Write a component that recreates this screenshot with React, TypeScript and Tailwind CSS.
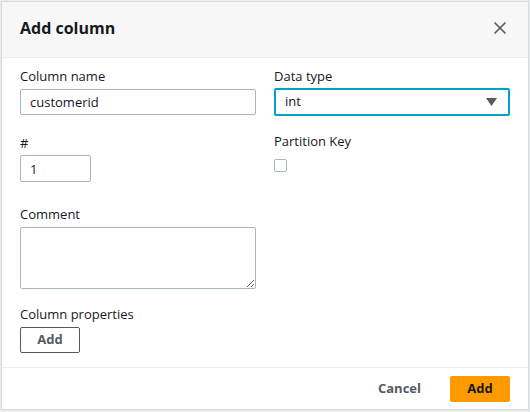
import { X } from 'lucide-react'

export default function App() {
  return (
    <div className="w-[530px] h-[412px] bg-[#eaeded] pt-px pl-px" style={{ fontFamily: '"Open Sans", sans-serif' }}>
      <div className="w-[528px] h-[409px] bg-white border border-[#d5dbdb] flex flex-col">
        <div className="h-[56px] bg-[#f7f7f7] border-b border-[#eaeded] flex items-center justify-between pl-[18px] pr-[18px] pb-[3px]">
          <h1 className="text-[16px] font-bold text-[#16191f]">Add column</h1>
          <button className="text-[#545b64]">
            <X size={20} strokeWidth={2} />
          </button>
        </div>

        <div className="flex-1 px-[18px] pt-[8px]">
          <div className="grid grid-cols-[236px_236px] gap-x-[18px]">
            <div>
              <label className="block text-[13px] text-[#16191f] leading-[20px] mb-[3px]">Column name</label>
              <input
                defaultValue="customerid"
                className="w-full h-[26px] border border-[#aab7b8] rounded-[2px] px-[9px] text-[13px] text-[#16191f] outline-none"
              />
            </div>
            <div>
              <label className="block text-[13px] text-[#16191f] leading-[20px] mb-[2px]">Data type</label>
              <div className="w-full h-[28px] border-2 border-[#00a1c9] rounded-[2px] px-[9px] flex items-center justify-between">
                <span className="text-[13px] text-[#16191f]">int</span>
                <svg width="11" height="8" viewBox="0 0 11 8" className="mr-[2px]">
                  <path d="M0 0 H11 L5.5 8 Z" fill="#545b64" />
                </svg>
              </div>
            </div>

            <div className="mt-[17px]">
              <label className="block text-[13px] text-[#16191f] leading-[20px] mb-[2px]">#</label>
              <input
                defaultValue="1"
                className="w-[71px] h-[27px] border border-[#aab7b8] rounded-[2px] px-[9px] text-[13px] text-[#16191f] outline-none"
              />
            </div>
            <div className="mt-[15px]">
              <label className="block text-[13px] text-[#16191f] leading-[20px]">Partition Key</label>
              <div className="mt-[8px] w-[13px] h-[13px] border border-[#aab7b8] rounded-[2px] bg-white" />
            </div>
          </div>

          <div className="mt-[22px]">
            <label className="block text-[13px] text-[#16191f] leading-[20px] mb-[3px]">Comment</label>
            <textarea className="block w-[236px] h-[62px] border border-[#aab7b8] rounded-[2px] px-[9px] py-[4px] text-[13px] outline-none" />
          </div>

          <div className="mt-[15px]">
            <label className="block text-[13px] text-[#16191f] leading-[20px] mb-[2px]">Column properties</label>
            <button className="w-[60px] h-[26px] border border-[#545b64] rounded-[2px] text-[13px] font-bold text-[#545b64] bg-white">
              Add
            </button>
          </div>
        </div>

        <div className="h-[42px] border-t border-[#eaeded] flex items-center justify-end pr-[18px] gap-[29px]">
          <button className="text-[13px] font-bold text-[#545b64]">Cancel</button>
          <button className="w-[60px] h-[26px] bg-[#ff9900] rounded-[2px] text-[13px] font-bold text-[#16191f]">Add</button>
        </div>
      </div>
    </div>
  )
}
